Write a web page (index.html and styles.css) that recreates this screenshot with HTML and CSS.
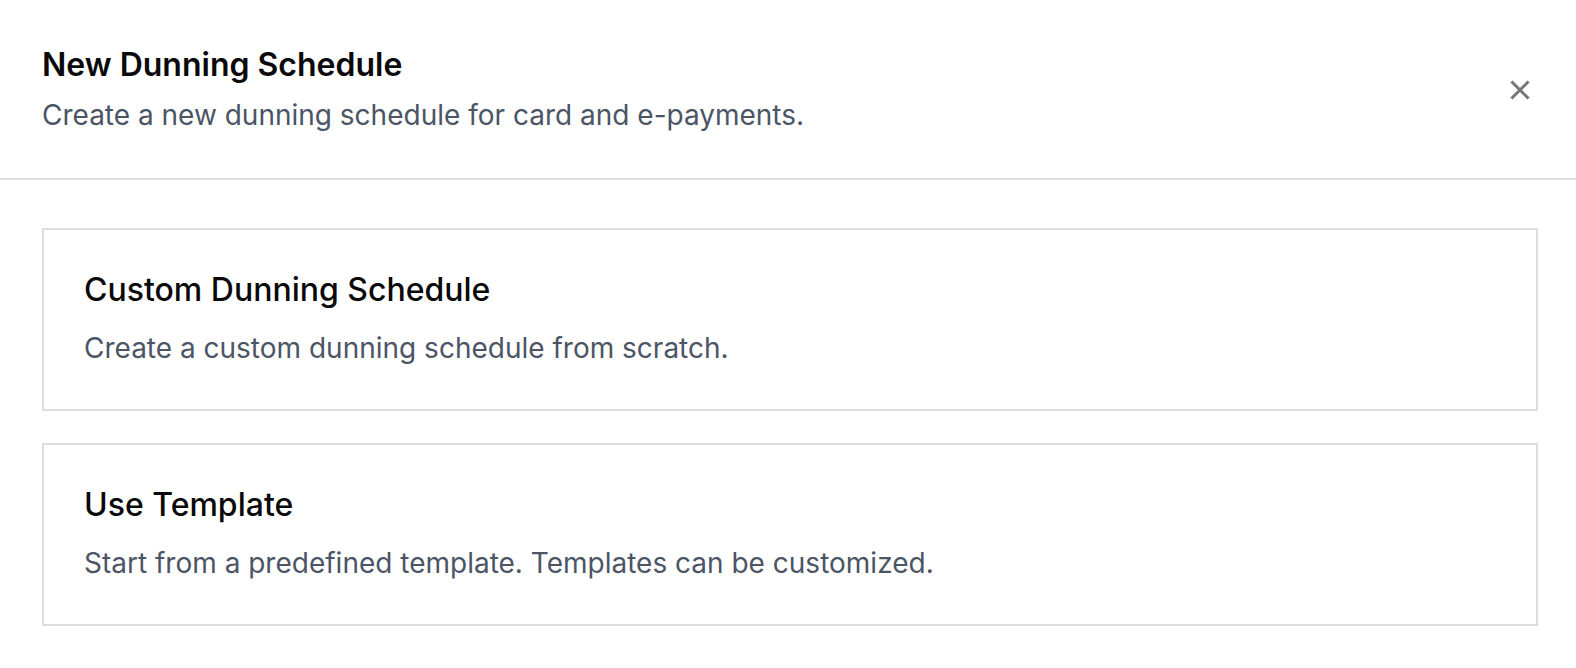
FILE: index.html
```html
<!DOCTYPE html>
<html>
<head>
<meta charset="utf-8">
<link rel="stylesheet" href="styles.css">
</head>
<body>
<div class="dialog">
  <header class="dialog-header">
    <div class="header-text">
      <h1 class="title">New Dunning Schedule</h1>
      <p class="subtitle">Create a new dunning schedule for card and e-payments.</p>
    </div>
    <button class="close" aria-label="Close">
      <svg width="20" height="20" viewBox="0 0 20 20"><path d="M2.5 2.5 L17.5 17.5 M17.5 2.5 L2.5 17.5" stroke="#767676" stroke-width="3" stroke-linecap="square"/></svg>
    </button>
  </header>
  <div class="dialog-body">
    <div class="option">
      <h2 class="option-title">Custom Dunning Schedule</h2>
      <p class="option-desc">Create a custom dunning schedule from scratch.</p>
    </div>
    <div class="option">
      <h2 class="option-title">Use Template</h2>
      <p class="option-desc">Start from a predefined template. Templates can be customized.</p>
    </div>
  </div>
</div>
</body>
</html>
```
FILE: styles.css
```css
html, body {
  margin: 0;
  padding: 0;
  background: #fff;
  font-family: Inter, "Noto Sans", sans-serif;
  overflow: hidden;
}
*, *::before, *::after {
  box-sizing: border-box;
}
.dialog {
  width: 100%;
}
.dialog-header {
  display: flex;
  justify-content: space-between;
  align-items: center;
  padding: 41px 46px 41px 42px;
  border-bottom: 2px solid #dcdcdc;
}
.title {
  margin: 0;
  font-size: 32px;
  line-height: 48px;
  font-weight: 600;
  color: #0a0a0a;
}
.subtitle {
  margin: 4px 0 0;
  font-size: 28px;
  line-height: 44px;
  color: #4b5565;
}
.close {
  border: none;
  background: none;
  padding: 0;
  width: 20px;
  height: 20px;
  display: flex;
  margin-top: 2px;
}
.dialog-body {
  padding: 48px 38px 40px 42px;
  display: flex;
  flex-direction: column;
  gap: 32px;
}
.option {
  border: 2px solid #dcdcdc;
  padding: 38px 40px 39px;
}
.option-title {
  margin: 0;
  font-size: 32px;
  line-height: 44px;
  font-weight: 500;
  color: #0a0a0a;
}
.option-desc {
  margin: 14px 0 0;
  font-size: 28px;
  line-height: 44px;
  color: #4b5565;
}
```
